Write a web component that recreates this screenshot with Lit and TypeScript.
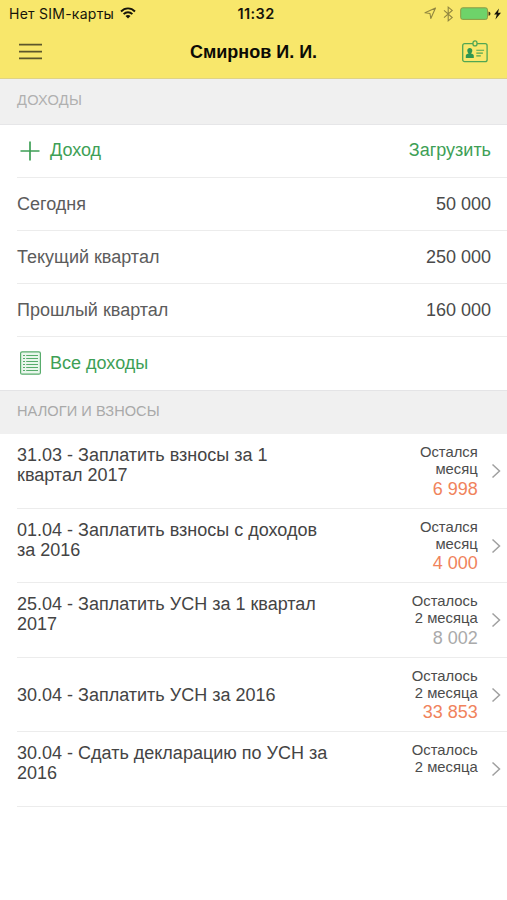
import { LitElement, html, css, nothing } from "lit";
import { customElement } from "lit/decorators.js";

interface Task {
  title: string[];
  left: string[];
  sum?: string;
  muted?: boolean;
}

const PERIODS: [string, string][] = [
  ["Сегодня", "50 000"],
  ["Текущий квартал", "250 000"],
  ["Прошлый квартал", "160 000"],
];

const TASKS: Task[] = [
  { title: ["31.03 - Заплатить взносы за 1", "квартал 2017"], left: ["Остался", "месяц"], sum: "6 998" },
  { title: ["01.04 - Заплатить взносы с доходов", "за 2016"], left: ["Остался", "месяц"], sum: "4 000" },
  { title: ["25.04 - Заплатить УСН за 1 квартал", "2017"], left: ["Осталось", "2 месяца"], sum: "8 002", muted: true },
  { title: ["30.04 - Заплатить УСН за 2016"], left: ["Осталось", "2 месяца"], sum: "33 853" },
  { title: ["30.04 - Сдать декларацию по УСН за", "2016"], left: ["Осталось", "2 месяца"] },
];

@customElement("app-root")
export class AppRoot extends LitElement {
  static styles = css`
    :host {
      display: block;
      width: 507px;
      height: 900px;
      overflow: hidden;
      background: #fff;
      color: #4c4c4c;
      font: 18px/20px "Liberation Sans", Arial, sans-serif;
    }
    svg { display: block; fill: none; flex: none; }
    .top {
      height: 79px;
      box-sizing: border-box;
      background: #f8e76b;
      border-bottom: 1px solid #dfd387;
      color: #16140a;
    }
    .status, .nav {
      display: grid;
      grid-template-columns: 1fr auto 1fr;
      align-items: center;
    }
    .status {
      height: 28px;
      padding: 0 4px 0 9px;
      font: 500 14px/28px Inter, sans-serif;
    }
    .carrier { display: flex; align-items: center; gap: 6px; font-weight: 400; letter-spacing: 0.25px; }
    .clock { font-size: 14.5px; font-weight: 600; letter-spacing: 0.4px; }
    .indicators { display: flex; align-items: center; justify-content: flex-end; }
    .nav { height: 48px; padding: 0 18px; }
    .name { font: 700 18px/48px "Liberation Sans", Arial, sans-serif; color: #0c0b05; }
    .badge { justify-self: end; }
    .section {
      height: 46px;
      box-sizing: border-box;
      padding: 0 17px;
      border-bottom: 1px solid #e6e6e8;
      background: #f0f0f0;
      color: #a9a9a9;
      font-size: 14.6px;
      letter-spacing: 0.05px;
      line-height: 42px;
    }
    .first { color: #b0b0b0; letter-spacing: 0.25px; }
    .second { height: 44px; border-top: 1px solid #e4e4e6; border-bottom: 0; line-height: 41px; }
    .row, .task {
      display: flex;
      align-items: center;
      margin-left: 17px;
      box-sizing: border-box;
      border-bottom: 1.5px solid #ececec;
    }
    .row { height: 53.1px; justify-content: space-between; padding: 0 16px 2px 0; color: #5c5c5c; }
    .row.period { padding-bottom: 0.8px; }
    .row.last { border-bottom: 0; }
    .value { color: #4a4a4a; }
    .action { display: flex; align-items: center; gap: 9px; color: #3e9f56; }
    .task { height: 74.5px; padding-right: 6px; align-items: flex-start; }
    .title { flex: 1; padding-top: 11px; white-space: nowrap; color: #444; }
    .title.single { padding-top: 27px; }
    .side { padding-top: 10px; text-align: right; white-space: nowrap; font-size: 14.8px; line-height: 16.7px; color: #4c4c4c; }
    .sum { font-size: 18px; line-height: 22px; color: #f0835c; }
    .sum.muted { color: #aaa; }
    .chevron { margin: 29px 0 0 13.3px; }
  `;

  private header() {
    return html`
      <header class="top">
        <div class="status">
          <div class="carrier">
            <span>Нет SIM-карты</span>
            <svg width="16" height="14" viewBox="0 0 16 14" stroke="#16140a" stroke-width="1.9">
              <path d="M1 4.5C5 .3 11 .3 15 4.5M3.6 7.1c2.5-2.5 6.3-2.5 8.8 0" />
              <path d="M5.5 8.9c1.5-1.3 3.5-1.3 5 0L8 11.5z" fill="#16140a" stroke="none" />
            </svg>
          </div>
          <span class="clock">11:32</span>
          <div class="indicators">
            <svg width="79" height="18" viewBox="0 0 79 18">
              <path d="M1 7.8 11.5 3 6.8 13.5 6 8.5z" stroke="#91863f" stroke-width="1.1" stroke-linejoin="round" />
              <path d="m20 5.4 8.2 7.2-4 3.3V2.1l4 3.3L20 12.6" stroke="#91863f" stroke-width="1.1" />
              <rect x="36.7" y="2.8" width="26.8" height="11.6" rx="2" fill="#6ed36a" stroke="#8a9b45" stroke-width="1" />
              <path d="M64.5 6.6q2 .2 2 2.1t-2 2.1z" fill="#3b3515" />
              <path d="M75 3.4l-4.9 6.2h2.7l-1.4 4.8 5.6-6.7h-3z" fill="#16140a" />
            </svg>
          </div>
        </div>
        <div class="nav">
          <svg width="25" height="18" viewBox="0 0 25 18" stroke="#5d572b" stroke-width="1.7">
            <path d="M1 1.6h23M1 8.6h23M1 15.4h23" />
          </svg>
          <span class="name">Смирнов И. И.</span>
          <svg class="badge" width="27" height="24" viewBox="0 0 27 24" stroke="#51a653" stroke-width="1.3">
            <rect x=".7" y="3.7" width="24.4" height="18" rx="2" />
            <rect x="11" y=".9" width="4" height="5" rx="2" fill="#f8e76b" />
            <path d="M3.8 17.9v-2.2c0-1.3 1.6-1.6 2.8-2.1-1-1-1.3-2-1.3-3 0-1.7 1-2.7 2.5-2.7s2.5 1 2.5 2.7c0 1-.3 2-1.3 3 1.2.5 2.8.8 2.8 2.1v2.2z" fill="#2f9650" stroke="none" />
            <path d="M14.3 10.2h7.8M14.3 13.1h6.6M14.3 15.9h4.5" stroke-width="1.1" />
          </svg>
        </div>
      </header>
    `;
  }

  render() {
    return html`
      ${this.header()}
      <div class="section first">ДОХОДЫ</div>
      <div class="row">
        <span class="action">
          <svg width="24" height="24" viewBox="0 0 24 24" stroke="#3e9f56" stroke-width="1.7">
            <path d="M3.5 13h19M13 3.5v19" />
          </svg>
          Доход
        </span>
        <span class="action">Загрузить</span>
      </div>
      ${PERIODS.map(([label, value]) => html`<div class="row period"><span>${label}</span><span class="value">${value}</span></div>`)}
      <div class="row last">
        <span class="action">
          <svg width="24" height="26" viewBox="0 0 24 26" stroke="#58ac6c">
            <rect x="3.6" y="1.8" width="19.8" height="22.4" rx="1.5" fill="#e9f6ec" stroke-width="1.2" />
            <path d="M6 5.5h2M6 8.5h2M6 11.5h2M6 14.5h2M6 17.5h2M6 20.5h2M9.2 5.5H21M9.2 8.5H21M9.2 11.5H21M9.2 14.5H21M9.2 17.5H21M9.2 20.5H21" stroke-width="1" />
          </svg>
          Все доходы
        </span>
      </div>
      <div class="section second">НАЛОГИ И ВЗНОСЫ</div>
      ${TASKS.map(
        (t) => html`
          <div class="task">
            <div class="title ${t.title.length === 1 ? "single" : ""}">${t.title.map((l) => html`<div>${l}</div>`)}</div>
            <div class="side">
              ${t.left.map((l) => html`<div>${l}</div>`)}
              ${t.sum ? html`<div class="sum ${t.muted ? "muted" : ""}">${t.sum}</div>` : nothing}
            </div>
            <svg class="chevron" width="10" height="16" viewBox="0 0 10 16" stroke="#a0a0a0" stroke-width="1.5">
              <path d="m1.5 1.5 7 6.5-7 6.5" />
            </svg>
          </div>
        `,
      )}
    `;
  }
}
